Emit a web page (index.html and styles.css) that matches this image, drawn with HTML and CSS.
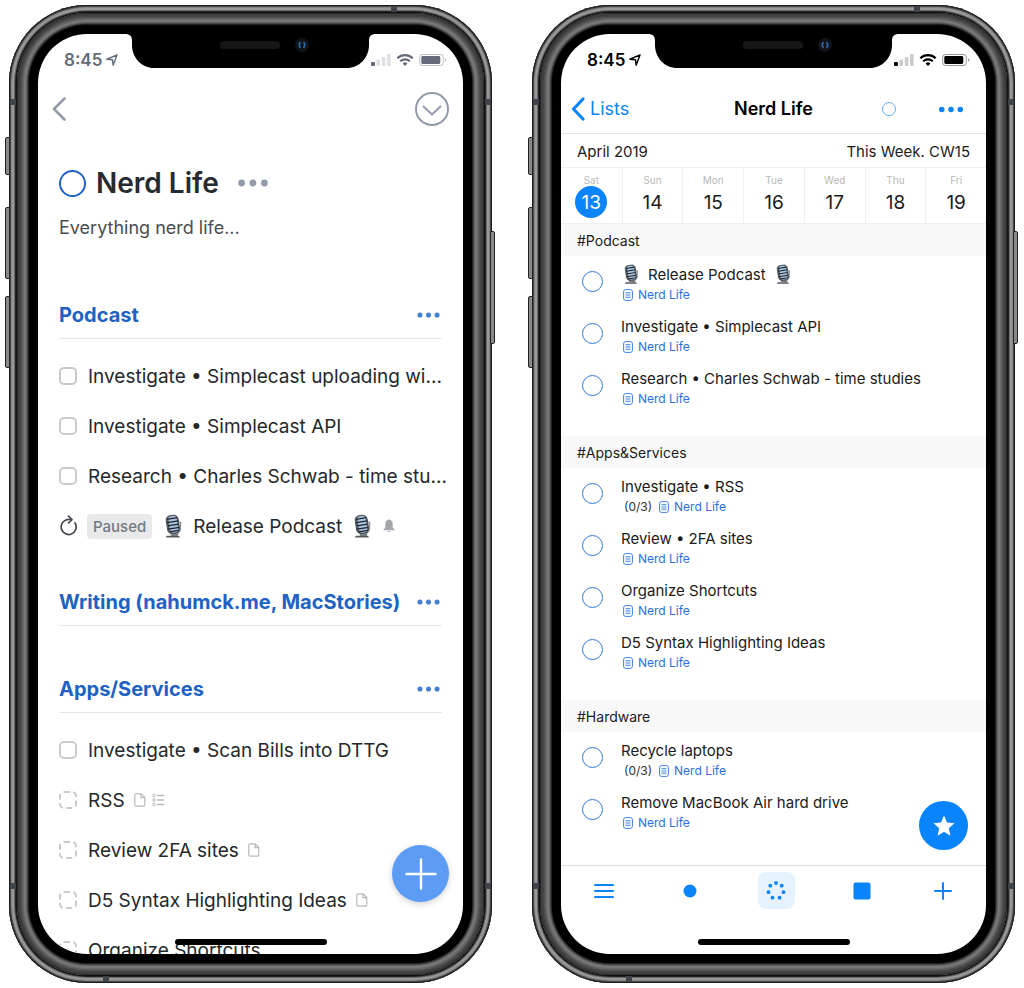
FILE: index.html
```html
<!DOCTYPE html>
<html lang="en">
<head>
<meta charset="utf-8">
<meta name="viewport" content="width=device-width, initial-scale=1">
<title>Nerd Life</title>
<link rel="stylesheet" href="styles.css">
</head>
<body>
<svg class="sprite" aria-hidden="true">
  <symbol id="notch" viewBox="0 0 251 34">
    <path fill="#000" d="M0 0C5 0 7 2 7 7v4c0 13 10 23 22 23h193c12 0 22-10 22-23V7c0-5 2-7 7-7z"/>
    <rect x="95" y="7" width="60" height="8" rx="4" fill="#161616"/>
    <circle cx="177" cy="11" r="7" fill="#11131a"/>
    <path d="M175.500 8.200a4 4 0 0 0 0 5.600M178.500 8.200a4 4 0 0 1 0 5.600" fill="none" stroke="#2a6cab" stroke-width="1.800"/>
  </symbol>
  <symbol id="location" viewBox="0 0 12 12">
    <path d="M11 1L.9 5.200l5.600.6.600 5.400z" fill="none" stroke="currentColor" stroke-width="1.400" stroke-linejoin="round"/>
  </symbol>
  <symbol id="radios" viewBox="0 0 76 14">
    <rect x="0" y="9" width="4" height="4" rx="1" fill="currentColor"/>
    <g fill="currentColor" opacity=".2"><rect x="5.4" y="6.6" width="3.6" height="6.4" rx="1"/><rect x="10.8" y="4" width="3.6" height="9" rx="1"/><rect x="16" y="1" width="3.6" height="12" rx="1"/></g>
    <g fill="none" stroke="currentColor" stroke-width="2.2"><path d="M26.3 5.2a11 11 0 0 1 15.400 0M29.200 8.300a7 7 0 0 1 9.600 0"/></g>
    <path d="M34 13l-2.400-2.600a3.500 3.500 0 0 1 4.800 0z" fill="currentColor"/>
    <rect x="48.700" y="1.500" width="23.600" height="11" rx="2.800" fill="none" stroke="currentColor" opacity=".4"/>
    <rect x="50.300" y="3" width="19" height="8" rx="1.400" fill="currentColor"/>
    <path d="M74 5.200c2 .6 2 3 0 3.600z" fill="currentColor" opacity=".4"/>
  </symbol>
  <symbol id="dots" viewBox="0 0 32 8">
    <g fill="currentColor"><circle cx="4.600" cy="4" r="3.400"/><circle cx="16" cy="4" r="3.400"/><circle cx="27.400" cy="4" r="3.400"/></g>
  </symbol>
  <symbol id="mic" viewBox="0 0 20 26">
    <path d="M3.500 22.500h12.500l1.500 2H2.500z" fill="#55595e"/>
    <path d="M7 17l1 6h7l1-6z" fill="#777c83"/>
    <path d="M16.500 8l1.500 1-.4 8-2.600 3" fill="none" stroke="#8a8f95" stroke-width="1.300"/>
    <g transform="rotate(-9 10 10)">
      <rect x="3.500" y="1.500" width="12.500" height="18.500" rx="4.500" fill="#59616c"/>
      <rect x="6" y="2" width="8.500" height="17.500" rx="3" fill="#a9c4e0"/>
      <path d="M4.500 4.600h10.500M4 8h12M4 11.400h12M4 14.800h12M5 18h10" stroke="#20252d" stroke-width="1.300"/>
      <rect x="3.500" y="1.500" width="12.500" height="18.500" rx="4.500" fill="none" stroke="#4b5058" stroke-width="1"/>
    </g>
  </symbol>
  <symbol id="page" viewBox="0 0 12 14">
    <path d="M2.200.8h5L10.800 4.500v7.300a1.400 1.400 0 0 1-1.400 1.400H2.200a1.400 1.400 0 0 1-1.400-1.400V2.200A1.400 1.400 0 0 1 2.200.8zM7 1v3.700h3.700" fill="none" stroke="currentColor" stroke-width="1.200" stroke-linejoin="round"/>
  </symbol>
  <symbol id="checklist" viewBox="0 0 12 14">
    <g fill="none" stroke="currentColor" stroke-width="1"><circle cx="2" cy="2.500" r="1.300"/><circle cx="2" cy="7" r="1.300"/><circle cx="2" cy="11.500" r="1.300"/><path d="M5 2.500h7M5 7h7M5 11.500h7" stroke-width="1.300"/></g>
  </symbol>
  <symbol id="note" viewBox="0 0 10 12">
    <rect x=".6" y=".6" width="8.800" height="10.800" rx="2" fill="none" stroke="currentColor" stroke-width=".9"/>
    <path d="M2.500 3.500h5M2.500 5.200h5M2.500 6.900h5M2.500 8.600h5" stroke="currentColor" stroke-width=".7"/>
  </symbol>
</svg>

<main class="stage">
  <section class="phone" aria-label="Project view">
    <i class="key key-mute"></i><i class="key key-up"></i><i class="key key-down"></i><i class="key key-power"></i>
    <i class="band band-tl"></i><i class="band band-tr"></i><i class="band band-bl"></i><i class="band band-br"></i><i class="band band-top"></i><i class="band band-bottom"></i>
    <div class="rim"><div class="bezel"><div class="screen project">
      <svg class="notch"><use href="#notch"/></svg>
      <div class="status"><span class="time">8:45</span><svg class="location"><use href="#location"/></svg><svg class="radios"><use href="#radios"/></svg></div>
      <nav class="project-nav">
        <button class="plain" aria-label="Back"><svg width="14" height="24" viewBox="0 0 14 24"><path d="M12.500 1.500L2 12l10.500 10.500" fill="none" stroke="currentColor" stroke-width="2.600" stroke-linecap="round" stroke-linejoin="round"/></svg></button>
        <button class="plain" aria-label="Collapse"><svg width="34" height="34" viewBox="0 0 34 34"><g fill="none" stroke="currentColor" stroke-width="2" stroke-linecap="round" stroke-linejoin="round"><circle cx="17" cy="17" r="16"/><path d="M8.500 14.500l8.500 8 8.500-8"/></g></svg></button>
      </nav>
      <div class="scroller">
        <header class="project-head">
          <input class="ring ring-title" type="checkbox" id="p0" aria-label="Complete project">
          <h1>Nerd Life</h1>
          <button class="plain more-title" aria-label="Project options"><svg><use href="#dots"/></svg></button>
        </header>
        <p class="subtitle">Everything nerd life...</p>

        <section class="group">
          <div class="group-head"><h2>Podcast</h2><button class="plain more" aria-label="Podcast options"><svg><use href="#dots"/></svg></button></div>
          <ul>
            <li><input type="checkbox" id="a1"><label for="a1">Investigate • Simplecast uploading wi...</label></li>
            <li><input type="checkbox" id="a2"><label for="a2">Investigate • Simplecast API</label></li>
            <li><input type="checkbox" id="a3"><label for="a3">Research • Charles Schwab - time stu...</label></li>
            <li>
              <svg class="repeat" viewBox="0 0 20 22"><path d="M9.500 4.500A7.500 7.500 0 1 0 16 8M7.500 4.500h5M9.500 1.200l3.500 3.400-3.500 3.400" fill="none" stroke="currentColor" stroke-width="1.700" stroke-linecap="round" stroke-linejoin="round"/></svg>
              <span class="paused">Paused</span>
              <span class="with-mic"><svg class="mic"><use href="#mic"/></svg><span class="name">Release Podcast</span><svg class="mic"><use href="#mic"/></svg></span>
              <svg class="bell" viewBox="0 0 12 14"><path d="M6 .5C3.500.8 2.300 2.500 2.300 5v2.500C2.300 9 1.500 9.700.4 10.500v.8h11.200v-.8C10.500 9.700 9.700 9 9.700 7.500V5C9.700 2.500 8.500.8 6 .5zM4.300 12.200a1.800 1.400 0 0 0 3.400 0z" fill="currentColor"/></svg>
            </li>
          </ul>
        </section>

        <section class="group">
          <div class="group-head"><h2>Writing (nahumck.me, MacStories)</h2><button class="plain more" aria-label="Writing options"><svg><use href="#dots"/></svg></button></div>
          <ul></ul>
        </section>

        <section class="group">
          <div class="group-head"><h2>Apps/Services</h2><button class="plain more" aria-label="Apps options"><svg><use href="#dots"/></svg></button></div>
          <ul>
            <li><input type="checkbox" id="b1"><label for="b1">Investigate • Scan Bills into DTTG</label></li>
            <li><input class="someday" type="checkbox" id="b2"><label for="b2">RSS</label><svg class="meta"><use href="#page"/></svg><svg class="meta meta-next"><use href="#checklist"/></svg></li>
            <li><input class="someday" type="checkbox" id="b3"><label for="b3">Review 2FA sites</label><svg class="meta"><use href="#page"/></svg></li>
            <li><input class="someday" type="checkbox" id="b4"><label for="b4">D5 Syntax Highlighting Ideas</label><svg class="meta"><use href="#page"/></svg></li>
            <li><input class="someday" type="checkbox" id="b5"><label for="b5">Organize Shortcuts</label></li>
          </ul>
        </section>
      </div>
      <button class="fab fab-add" aria-label="Add task"><svg width="32" height="32" viewBox="0 0 32 32"><path d="M16 1.500v29M1.500 16h29" stroke="#fff" stroke-width="2.400" stroke-linecap="round"/></svg></button>
      <i class="home"></i>
    </div></div></div>
  </section>

  <section class="phone" aria-label="List view">
    <i class="key key-mute"></i><i class="key key-up"></i><i class="key key-down"></i><i class="key key-power"></i>
    <i class="band band-tl"></i><i class="band band-tr"></i><i class="band band-bl"></i><i class="band band-br"></i><i class="band band-top"></i><i class="band band-bottom"></i>
    <div class="rim"><div class="bezel"><div class="screen lists">
      <svg class="notch"><use href="#notch"/></svg>
      <div class="status"><span class="time">8:45</span><svg class="location"><use href="#location"/></svg><svg class="radios"><use href="#radios"/></svg></div>
      <nav class="list-nav">
        <a class="back" href="#lists"><svg width="14" height="24" viewBox="0 0 14 24"><path d="M12 2L2.500 12 12 22" fill="none" stroke="currentColor" stroke-width="3.200" stroke-linecap="round" stroke-linejoin="round"/></svg>Lists</a>
        <h1>Nerd Life</h1>
        <div class="nav-actions">
          <button class="plain" aria-label="Focus"><svg width="14" height="14" viewBox="0 0 14 14"><circle cx="7" cy="7" r="6.500" fill="none" stroke="#5aaefc"/></svg></button>
          <button class="plain more-nav" aria-label="List options"><svg><use href="#dots"/></svg></button>
        </div>
      </nav>
      <div class="period"><span>April 2019</span><span>This Week. CW15</span></div>
      <div class="week">
        <button class="day today"><small>Sat</small><b>13</b></button>
        <button class="day"><small>Sun</small><b>14</b></button>
        <button class="day"><small>Mon</small><b>15</b></button>
        <button class="day"><small>Tue</small><b>16</b></button>
        <button class="day"><small>Wed</small><b>17</b></button>
        <button class="day"><small>Thu</small><b>18</b></button>
        <button class="day"><small>Fri</small><b>19</b></button>
      </div>
      <div class="scroller">
        <section class="tag">
          <h2>#Podcast</h2>
          <ul>
            <li><input class="ring" type="checkbox" id="c1"><div><label class="with-mic" for="c1"><svg class="mic"><use href="#mic"/></svg>Release Podcast<svg class="mic"><use href="#mic"/></svg></label><p><svg class="note"><use href="#note"/></svg>Nerd Life</p></div></li>
            <li><input class="ring" type="checkbox" id="c2"><div><label for="c2">Investigate • Simplecast API</label><p><svg class="note"><use href="#note"/></svg>Nerd Life</p></div></li>
            <li><input class="ring" type="checkbox" id="c3"><div><label for="c3">Research • Charles Schwab - time studies</label><p><svg class="note"><use href="#note"/></svg>Nerd Life</p></div></li>
          </ul>
        </section>
        <section class="tag">
          <h2>#Apps&amp;Services</h2>
          <ul>
            <li><input class="ring" type="checkbox" id="d1"><div><label for="d1">Investigate • RSS</label><p><span class="count">(0/3)</span><svg class="note"><use href="#note"/></svg>Nerd Life</p></div></li>
            <li><input class="ring" type="checkbox" id="d2"><div><label for="d2">Review • 2FA sites</label><p><svg class="note"><use href="#note"/></svg>Nerd Life</p></div></li>
            <li><input class="ring" type="checkbox" id="d3"><div><label for="d3">Organize Shortcuts</label><p><svg class="note"><use href="#note"/></svg>Nerd Life</p></div></li>
            <li><input class="ring" type="checkbox" id="d4"><div><label for="d4">D5 Syntax Highlighting Ideas</label><p><svg class="note"><use href="#note"/></svg>Nerd Life</p></div></li>
          </ul>
        </section>
        <section class="tag">
          <h2>#Hardware</h2>
          <ul>
            <li><input class="ring" type="checkbox" id="e1"><div><label for="e1">Recycle laptops</label><p><span class="count">(0/3)</span><svg class="note"><use href="#note"/></svg>Nerd Life</p></div></li>
            <li><input class="ring" type="checkbox" id="e2"><div><label for="e2">Remove MacBook Air hard drive</label><p><svg class="note"><use href="#note"/></svg>Nerd Life</p></div></li>
          </ul>
        </section>
      </div>
      <div class="tabs">
        <button class="fab fab-star" aria-label="Favourites"><svg width="22" height="22" viewBox="0 0 22 22"><path d="M11 .6l3 7 7.500.7-5.700 5 1.700 7.400L11 16.800l-6.500 3.900 1.700-7.400L.5 8.300 8 7.600z" fill="#fff"/></svg></button>
        <button class="tab" aria-label="Menu"><svg width="20" height="16" viewBox="0 0 20 16"><path d="M1 2h18M1 8h18M1 14h18" stroke="currentColor" stroke-width="2" stroke-linecap="round"/></svg></button>
        <button class="tab" aria-label="Today"><svg width="14" height="14" viewBox="0 0 14 14"><circle cx="7" cy="7" r="6.500" fill="currentColor"/></svg></button>
        <button class="tab tab-active" aria-label="Week"><svg width="20" height="20" viewBox="0 0 20 20"><g fill="currentColor"><circle cx="10" cy="2" r="1.900"/><circle cx="15.700" cy="4.700" r="1.900"/><circle cx="17.500" cy="11.200" r="1.900"/><circle cx="13.600" cy="16.700" r="1.900"/><circle cx="6.500" cy="16.700" r="1.900"/><circle cx="2.500" cy="11.200" r="1.900"/><circle cx="4.300" cy="4.700" r="1.900"/></g></svg></button>
        <button class="tab" aria-label="Calendar"><svg width="18" height="18" viewBox="0 0 18 18"><rect x=".5" y=".5" width="17" height="17" rx="2" fill="currentColor"/></svg></button>
        <button class="tab" aria-label="Add"><svg width="18" height="18" viewBox="0 0 18 18"><path d="M9 1v16M1 9h16" stroke="currentColor" stroke-width="2" stroke-linecap="round"/></svg></button>
      </div>
      <i class="home"></i>
    </div></div></div>
  </section>
</main>
</body>
</html>
```
FILE: styles.css
```css
* { box-sizing: border-box; }

body {
  margin: 0;
  background: #fff;
  font-family: Inter, "Liberation Sans", sans-serif;
  color: #222;
}

h1, h2, p, ul { margin: 0; padding: 0; }
ul { list-style: none; }
svg { display: block; flex: none; }
button { font: inherit; color: inherit; cursor: pointer; }
.sprite { position: absolute; width: 0; height: 0; }

.plain { padding: 0; border: 0; background: none; }

/* Device shell */
.stage {
  display: flex;
  gap: 40px;
  height: 100vh;
  padding: 5px 9px;
}

.phone {
  position: relative;
  flex: 1;
  min-width: 0;
  padding: 8px;
  border-radius: 78px;
  background: #111;
  box-shadow:
    inset 0 0 0 1px #1c1c1c,
    inset 0 0 0 2px #4a4848,
    inset 0 0 0 3px #868484,
    inset 0 0 0 5px #999797,
    inset 0 0 0 6px #6c6a6a,
    inset 0 0 0 7px #242323;
}

.rim {
  height: 100%;
  padding: 12px;
  border-radius: 70px;
  background: #000;
  box-shadow:
    inset 0 0 0 1px #2a2a2a,
    inset 0 0 0 3px #3f3f3f,
    inset 0 0 0 4px #474747,
    inset 0 0 0 5px #525252,
    inset 0 0 0 6px #5e5e5e,
    inset 0 0 0 7px #6a6a6a,
    inset 0 0 0 9px #777,
    inset 0 0 0 10px #606060,
    inset 0 0 0 11px #444,
    inset 0 0 0 12px #222;
}

.bezel {
  height: 100%;
  padding: 9px;
  border-radius: 58px;
  background: #000;
}

.screen {
  position: relative;
  display: flex;
  flex-direction: column;
  height: 100%;
  overflow: hidden;
  border-radius: 49px;
  background: #fff;
}

.key {
  position: absolute;
  left: -4px;
  width: 5px;
  border: 1px solid #222;
  border-radius: 2px 0 0 2px;
  background: #8a8888;
}
.key-mute { top: 132px; height: 38px; }
.key-up { top: 202px; height: 72px; }
.key-down { top: 291px; height: 72px; }
.key-power {
  right: -3px;
  left: auto;
  top: 226px;
  height: 113px;
  border-radius: 0 2px 2px 0;
}

.band { position: absolute; width: 6px; height: 6px; background: #3f444a; }
.band-tl { top: 94px; left: 1px; }
.band-tr { top: 94px; right: 1px; }
.band-bl { bottom: 94px; left: 1px; }
.band-br { bottom: 94px; right: 1px; }
.band-top { top: 1px; right: 95px; }
.band-bottom { bottom: 1px; left: 94px; }

.notch {
  position: absolute;
  top: 0;
  left: 50%;
  width: 251px;
  height: 34px;
  margin-left: -126px;
}

.home {
  position: absolute;
  bottom: 9px;
  left: 50%;
  width: 152px;
  height: 6px;
  margin-left: -76px;
  border-radius: 3px;
  background: #000;
}

.status {
  display: flex;
  flex: none;
  align-items: center;
  height: 52px;
  padding: 0 16px 0 26px;
}
.time { font-size: 17px; font-weight: 600; line-height: 20px; }
.location { width: 12px; height: 12px; margin-left: 4px; }
.radios { width: 76px; height: 14px; margin-left: auto; }

.scroller {
  flex: 1;
  min-height: 0;
  overflow-y: auto;
  scrollbar-width: none;
}

.fab {
  position: absolute;
  display: grid;
  place-items: center;
  padding: 0;
  border: 0;
  border-radius: 50%;
}

/* Project view */
.project .status { color: #656b78; }

.project-nav {
  display: flex;
  flex: none;
  align-items: center;
  justify-content: space-between;
  height: 46px;
  padding: 0 14px;
  color: #939bab;
}

.project-head {
  display: flex;
  align-items: center;
  height: 46px;
  margin-top: 28px;
  padding-left: 21px;
}
.project-head h1 {
  margin: 0 18px 0 10px;
  font-size: 28px;
  font-weight: 600;
  line-height: 36px;
  color: #252b30;
}
.more-title { color: #939bab; }
.more-title svg { width: 32px; height: 8px; }

.subtitle {
  margin: 10px 0 50px;
  padding-left: 21px;
  font-size: 18px;
  line-height: 24px;
  color: #4b4d50;
}

.group { padding: 0 14px 26px 21px; }
.group-head {
  display: flex;
  align-items: center;
  justify-content: space-between;
  height: 49px;
  margin-right: 7px;
  padding-top: 2px;
  border-bottom: 1px solid #e6e7e8;
  color: #2062c4;
}
.group-head h2 { font-size: 20px; font-weight: 700; line-height: 24px; }
.more { margin-right: 1px; color: #4580d2; }
.more svg { width: 25px; height: 6px; }

.group ul { padding-top: 12px; }
.group li {
  display: flex;
  align-items: center;
  height: 50px;
  font-size: 19px;
  line-height: 24px;
  color: #25282b;
  white-space: nowrap;
}
.group label, .name { padding-top: 2px; }
.group input {
  flex: none;
  appearance: none;
  width: 18px;
  height: 18px;
  margin: 0 11px 0 0;
  border: 2px solid #c8cacd;
  border-radius: 5px;
}
.group .someday { border-style: dashed; }

.repeat { width: 20px; height: 22px; margin-right: 8px; color: #444a50; }
.paused {
  padding: 0 6px;
  border-radius: 4px;
  background: #e7e9eb;
  color: #747a80;
  font-size: 15px;
  font-weight: 500;
  line-height: 25px;
}
.with-mic { display: flex; align-items: center; gap: 10px; }
.mic { width: 20px; height: 25px; }
.paused + .with-mic { margin-left: 11px; }
.bell { width: 12px; height: 14px; margin-left: 11px; color: #a3a6aa; }
.meta { width: 12px; height: 14px; margin-left: 9px; color: #b7b9bb; }
.meta-next { margin-left: 6px; }

.fab-add {
  right: 14px;
  bottom: 52px;
  width: 57px;
  height: 57px;
  background: #5c9cf5;
  box-shadow: 0 2px 6px rgba(0, 0, 0, .18);
}

/* Shared round check mark */
.ring {
  flex: none;
  appearance: none;
  width: 21px;
  height: 21px;
  margin: 0;
  border: 1px solid #3079e0;
  border-radius: 50%;
}
.ring-title { width: 27px; height: 27px; border: 2px solid #2062c4; }

/* List view */
.lists { color: #1b1b1b; }
.lists .status { color: #000; }

.list-nav {
  display: grid;
  flex: none;
  grid-template-columns: 1fr auto 1fr;
  align-items: center;
  height: 48px;
  padding: 0 22px 1px 10px;
  border-bottom: 1px solid #e2e2e2;
}
.back {
  display: flex;
  align-items: center;
  gap: 5px;
  color: #0a84fa;
  font-size: 18px;
  line-height: 24px;
  text-decoration: none;
}
.list-nav h1 {
  padding-left: 12px;
  font-size: 18px;
  font-weight: 600;
  line-height: 24px;
  color: #000;
}
.nav-actions {
  display: flex;
  align-items: center;
  justify-content: flex-end;
  gap: 42px;
  color: #0a84fa;
}
.more-nav svg { width: 26px; height: 7px; }

.period {
  display: flex;
  flex: none;
  justify-content: space-between;
  padding: 6px 16px 3px;
  font-size: 15px;
  line-height: 24px;
}

.week {
  display: grid;
  flex: none;
  grid-template-columns: repeat(7, 1fr);
  border-top: 1px solid #efefef;
  border-bottom: 1px solid #efefef;
}
.day {
  display: grid;
  justify-items: center;
  padding: 6px 0 5px;
  border: 0;
  border-left: 1px solid #efefef;
  background: none;
}
.day:first-child { border-left: 0; }
.day small { font-size: 10px; line-height: 12px; color: #b9b9b9; }
.day b {
  width: 32px;
  padding-top: 1px;
  border-radius: 50%;
  font-size: 19px;
  font-weight: 400;
  line-height: 31px;
  text-align: center;
}
.today b { background: #0a84fa; color: #fff; }

.tag { padding-bottom: 24px; }
.tag h2 {
  padding: 3px 16px 1px;
  background: #f9f9f9;
  font-size: 14px;
  font-weight: 400;
  line-height: 28px;
}
.tag li {
  display: flex;
  gap: 18px;
  height: 52px;
  padding: 7px 21px 0;
}
.tag .ring { margin-top: 8px; }
.tag label { height: 22px; padding-top: 1px; font-size: 15px; line-height: 21px; }
.tag label:not(.with-mic) { display: block; }
.tag p {
  display: flex;
  align-items: center;
  gap: 5px;
  padding: 3px 0 0 2px;
  color: #2a70d8;
  font-size: 12px;
  line-height: 14px;
}
.note { width: 10px; height: 12px; }
.count { margin: 0 2px 0 1px; color: #333; }
.tag .with-mic { gap: 8px; padding-left: 1px; }
.tag .mic { width: 18px; height: 21px; }

.tabs {
  position: relative;
  display: grid;
  flex: none;
  grid-template-columns: 86fr 86fr 86fr 86fr 76fr;
  justify-items: center;
  align-items: start;
  height: 89px;
  padding: 6px 5px 0 0;
  border-top: 1px solid #dcdcdc;
  color: #0a84fa;
}
.tab {
  display: grid;
  place-items: center;
  width: 37px;
  height: 37px;
  padding: 0;
  border: 0;
  border-radius: 8px;
  background: none;
}
.tab-active { background: #e6f2fe; }

.fab-star {
  right: 18px;
  bottom: 104px;
  width: 49px;
  height: 49px;
  background: #0a84fa;
}
```
